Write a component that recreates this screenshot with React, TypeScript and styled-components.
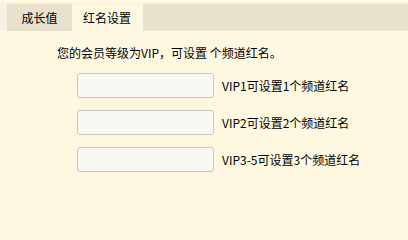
import React from "react";
import styled, { createGlobalStyle } from "styled-components";

const GlobalStyle = createGlobalStyle`
  html, body {
    margin: 0;
    padding: 0;
    background: #fef8e1;
  }
  body {
    font-family: "SimSun", "Noto Sans CJK SC", "Liberation Sans", sans-serif;
    font-size: 12px;
    color: #000;
  }
`;

const rows = [
  "VIP1可设置1个频道红名",
  "VIP2可设置2个频道红名",
  "VIP3-5可设置3个频道红名",
];

export default function App() {
  return (
    <>
      <GlobalStyle />
      <Page>
        <TabStrip>
          <Tab>成长值</Tab>
          <Tab $active>红名设置</Tab>
          <TabFill />
        </TabStrip>
        <Content>
          <Intro>您的会员等级为VIP，可设置 个频道红名。</Intro>
          <Rows>
            {rows.map((label) => (
              <Row key={label}>
                <NameInput type="text" />
                <Hint>{label}</Hint>
              </Row>
            ))}
          </Rows>
        </Content>
      </Page>
    </>
  );
}

const Page = styled.div`
  width: 408px;
  height: 219px;
  background: #fef8e1;
  overflow: hidden;
`;

const TabStrip = styled.div`
  display: flex;
  height: 27px;
  margin-top: 3px;
  padding-left: 7px;
  border-top: 1px solid #f4f0e4;
  background: linear-gradient(to right, #f5f1e3 7px, transparent 7px);
`;

const Tab = styled.div<{ $active?: boolean }>`
  display: flex;
  align-items: center;
  justify-content: center;
  width: ${(p) => (p.$active ? "70px" : "65px")};
  height: 100%;
  background: ${(p) => (p.$active ? "#fef8e1" : "#e7e1cd")};
  font-size: 12px;
  line-height: 1;
  padding-top: 1px;
  box-sizing: border-box;
`;

const TabFill = styled.div`
  flex: 1;
  height: 100%;
  margin-left: 1px;
  background: #e7e1cd;
  border-bottom: 1px solid #ece6d4;
  box-sizing: border-box;
`;

const Content = styled.div`
  padding: 15px 0 0 57px;
`;

const Intro = styled.div`
  line-height: 14px;
  height: 14px;
`;

const Rows = styled.div`
  display: flex;
  flex-direction: column;
  gap: 12px;
  margin-top: 13px;
  padding-left: 20px;
`;

const Row = styled.div`
  display: flex;
  align-items: center;
  gap: 8px;
`;

const NameInput = styled.input`
  width: 137px;
  height: 25px;
  box-sizing: border-box;
  border: 1px solid #c9c6bc;
  border-radius: 3px;
  background: #f9f8f3;
  outline: none;
  margin: 0;
  padding: 0 4px;
`;

const Hint = styled.span`
  font-size: 12px;
  line-height: 14px;
`;
